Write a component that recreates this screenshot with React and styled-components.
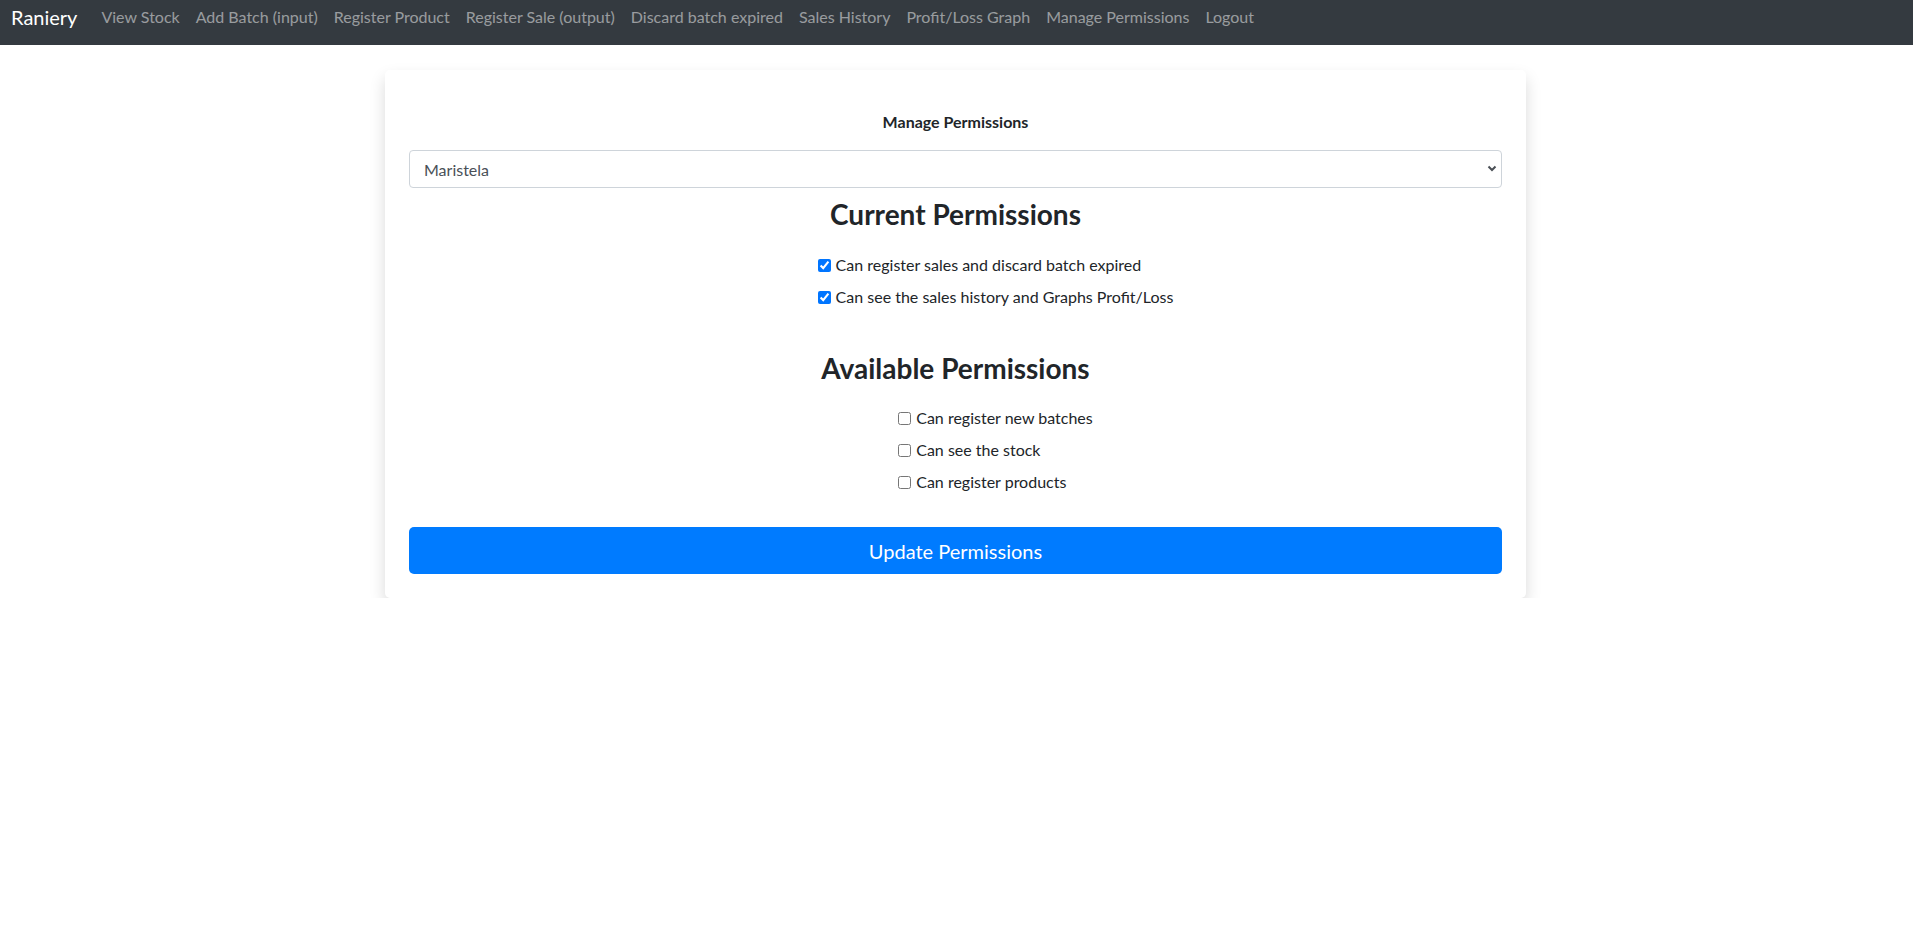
import React from 'react';
import styled, { createGlobalStyle } from 'styled-components';

const GlobalStyle = createGlobalStyle`
  body {
    margin: 0;
    font-family: Lato, 'Open Sans', sans-serif;
    font-size: 16px;
    color: #212529;
    background: #fff;
  }
`;

const Navbar = styled.nav`
  height: 45px;
  box-sizing: border-box;
  padding: 2px 11px 0;
  background: #343a40;
  display: flex;
  align-items: flex-start;
`;

const Brand = styled.a`
  font-size: 20px;
  line-height: 30px;
  color: #fff;
  margin-right: 16px;
  text-decoration: none;
`;

const NavLink = styled.a`
  font-size: 16px;
  line-height: 30px;
  padding: 0 8px;
  color: rgba(255, 255, 255, 0.5);
  text-decoration: none;
`;

const Card = styled.div`
  width: 1141px;
  box-sizing: border-box;
  margin: 25px 0 0 385px;
  padding: 24px;
  background: #fff;
  border-radius: 5px;
  box-shadow: 0 8px 16px rgba(0, 0, 0, 0.15);
  display: flex;
  flex-direction: column;
  align-items: center;
`;

const Title = styled.h6`
  margin: 17px 0 17px;
  font-size: 16px;
  line-height: 22px;
  font-weight: 700;
`;

const SelectWrap = styled.div`
  position: relative;
  width: 100%;
`;

const Select = styled.select`
  width: 100%;
  height: 38px;
  padding: 6px 14px;
  font-family: inherit;
  font-size: 16px;
  color: #495057;
  background: #fff;
  border: 1px solid #ced4da;
  border-radius: 4px;
  appearance: none;
  outline: none;
`;

const Chevron = styled.svg`
  position: absolute;
  right: 5px;
  top: 15px;
  pointer-events: none;
`;

const Heading = styled.h3`
  margin: ${p => p.$top}px 0 0;
  font-size: 28px;
  line-height: 34px;
  font-weight: 700;
`;

const List = styled.div`
  margin-top: ${p => p.$top}px;
  padding-left: 80px;
  display: flex;
  flex-direction: column;
  gap: 8px;
`;

const Option = styled.label`
  display: flex;
  align-items: center;
  font-size: 16px;
  line-height: 24px;

  input {
    width: 13px;
    height: 13px;
    margin: 0 5px 0 0;
  }
`;

const Button = styled.button`
  width: 100%;
  height: 47px;
  margin-top: 33px;
  border: none;
  border-radius: 5px;
  background: #007bff;
  color: #fff;
  font-family: inherit;
  font-size: 20px;
`;

const links = [
  'View Stock',
  'Add Batch (input)',
  'Register Product',
  'Register Sale (output)',
  'Discard batch expired',
  'Sales History',
  'Profit/Loss Graph',
  'Manage Permissions',
  'Logout',
];

const current = [
  'Can register sales and discard batch expired',
  'Can see the sales history and Graphs Profit/Loss',
];

const available = ['Can register new batches', 'Can see the stock', 'Can register products'];

export default function App() {
  return (
    <>
      <GlobalStyle />
      <Navbar>
        <Brand href="#">Raniery</Brand>
        {links.map(l => (
          <NavLink key={l} href="#">
            {l}
          </NavLink>
        ))}
      </Navbar>
      <Card>
        <Title>Manage Permissions</Title>
        <SelectWrap>
          <Select defaultValue="Maristela">
            <option>Maristela</option>
          </Select>
          <Chevron width="10" height="7" viewBox="0 0 10 7">
            <path d="M1.5 1.5 L5 5 L8.5 1.5" fill="none" stroke="#4a4f55" strokeWidth="2" />
          </Chevron>
        </SelectWrap>
        <Heading $top={9}>Current Permissions</Heading>
        <List $top={22}>
          {current.map(c => (
            <Option key={c}>
              <input type="checkbox" defaultChecked />
              {c}
            </Option>
          ))}
        </List>
        <Heading $top={42}>Available Permissions</Heading>
        <List $top={21}>
          {available.map(c => (
            <Option key={c}>
              <input type="checkbox" />
              {c}
            </Option>
          ))}
        </List>
        <Button>Update Permissions</Button>
      </Card>
    </>
  );
}
